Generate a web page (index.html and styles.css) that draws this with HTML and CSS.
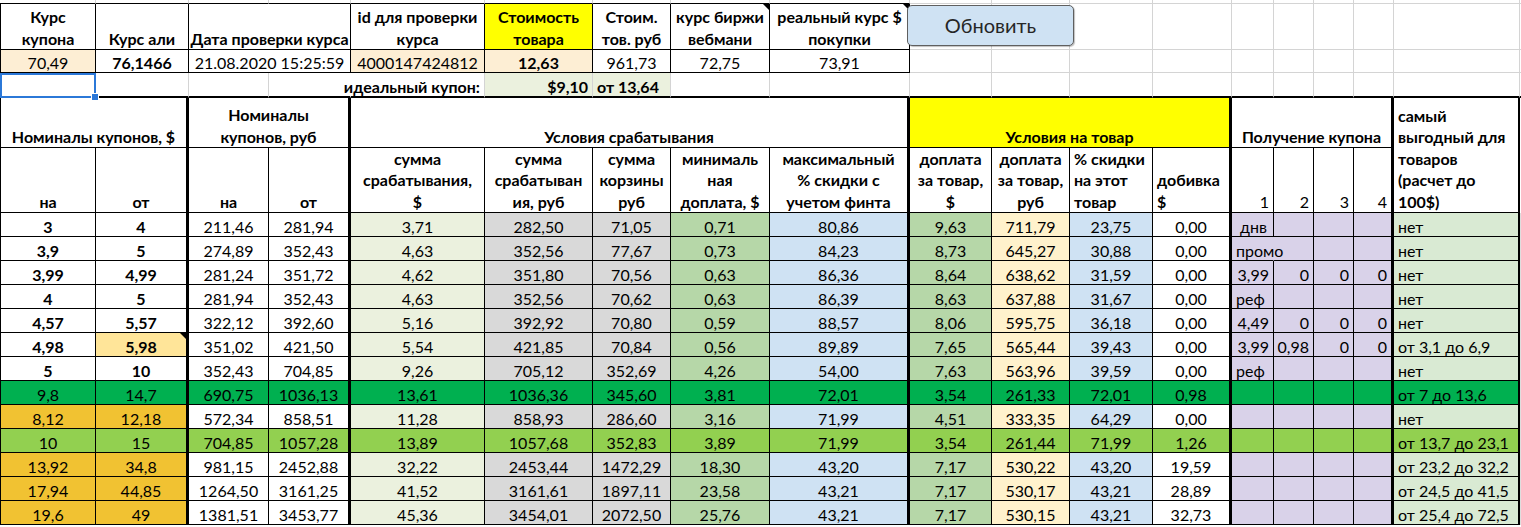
FILE: index.html
```html
<!DOCTYPE html>
<html lang="ru">
<head>
<meta charset="utf-8">
<title>Купоны</title>
<link rel="stylesheet" href="styles.css">
</head>
<body>
<div class="page">
<div class="sheet">

<div class="row r0">
<div class="c"></div><div class="c"></div><div class="c"></div><div class="c"></div><div class="c"></div><div class="c"></div><div class="c"></div><div class="c"></div><div class="c"></div><div class="c"></div><div class="c"></div><div class="c"></div><div class="c"></div><div class="c"></div><div class="c"></div><div class="c"></div><div class="c"></div><div class="c"></div><div class="c"></div>
</div>

<div class="row bk hd">
<div class="c fa"><span>Курс<br>купона</span></div>
<div class="c">Курс али</div>
<div class="c sp2">Дата проверки курса</div>
<div class="c"><span>id для проверки<br>курса</span></div>
<div class="c yl"><span>Стоимость<br>товара</span></div>
<div class="c"><span>Стоим.<br>тов. руб</span></div>
<div class="c cm"><span>курс биржи<br>вебмани</span></div>
<div class="c cm"><span>реальный курс $<br>покупки</span></div>
<div class="c gl"></div><div class="c gl"></div><div class="c gl"></div><div class="c gl"></div><div class="c gl"></div><div class="c gl"></div><div class="c gl"></div><div class="c gl"></div><div class="c gl"></div><div class="c gl"></div>
</div>

<div class="row bk">
<div class="c fa pe">70,49</div>
<div class="c bd">76,1466</div>
<div class="c sp2">21.08.2020 15:25:59</div>
<div class="c pe">4000147424812</div>
<div class="c pe bd">12,63</div>
<div class="c">961,73</div>
<div class="c">72,75</div>
<div class="c">73,91</div>
<div class="c gl"></div><div class="c gl"></div><div class="c gl"></div><div class="c gl"></div><div class="c gl"></div><div class="c gl"></div><div class="c gl"></div><div class="c gl"></div><div class="c gl"></div><div class="c gl"></div>
</div>

<div class="row r3">
<div class="c sc"><div class="sel"><i class="hdl"></i></div></div>
<div class="c"></div>
<div class="c"></div>
<div class="c nrb"></div>
<div class="c r bd">идеальный купон:</div>
<div class="c r bd lgn">$9,10</div>
<div class="c l bd lgn">от 13,64</div>
<div class="c"></div><div class="c"></div>
<div class="c"></div><div class="c"></div><div class="c"></div><div class="c"></div><div class="c"></div><div class="c"></div><div class="c"></div><div class="c"></div><div class="c"></div><div class="c"></div>
</div>

<div class="row bk hd">
<div class="c fa sp2 t3">Номиналы купонов, $</div>
<div class="c sp2 t3"><span>Номиналы<br>купонов, руб</span></div>
<div class="c sp5 t3">Условия срабатывания</div>
<div class="c sp4 t3 yl">Условия на товар</div>
<div class="c sp4 t3">Получение купона</div>
<div class="c rs2 l t2"><span>самый<br>выгодный для<br>товаров<br>(расчет до<br>100$)</span></div>
<div class="c rs2 sx"></div>
</div>

<div class="row bk hd">
<div class="c fa">на</div>
<div class="c t3">от</div>
<div class="c">на</div>
<div class="c t3">от</div>
<div class="c"><span>сумма<br>срабатывания,<br>$</span></div>
<div class="c"><span>сумма<br>срабатыван<br>ия, руб</span></div>
<div class="c"><span>сумма<br>корзины<br>руб</span></div>
<div class="c"><span>минималь<br>ная<br>доплата, $</span></div>
<div class="c t3"><span>максимальный<br>% скидки с<br>учетом финта</span></div>
<div class="c"><span>доплата<br>за товар,<br>$</span></div>
<div class="c"><span>доплата<br>за товар,<br>руб</span></div>
<div class="c l"><span>% скидки<br>на этот<br>товар</span></div>
<div class="c l t3"><span>добивка<br>$</span></div>
<div class="c r nw">1</div><div class="c r nw">2</div><div class="c r nw">3</div><div class="c r nw t3">4</div>
</div>

<div class="row bk dr">
<div class="c">3</div><div class="c">4</div><div class="c">211,46</div><div class="c">281,94</div><div class="c">3,71</div><div class="c">282,50</div><div class="c">71,05</div><div class="c">0,71</div><div class="c">80,86</div><div class="c">9,63</div><div class="c">711,79</div><div class="c">23,75</div><div class="c">0,00</div><div class="c l">&nbsp;днв</div><div class="c"></div><div class="c"></div><div class="c"></div><div class="c l">нет</div><div class="c"></div>
</div>
<div class="row bk dr">
<div class="c">3,9</div><div class="c">5</div><div class="c">274,89</div><div class="c">352,43</div><div class="c">4,63</div><div class="c">352,56</div><div class="c">77,67</div><div class="c">0,73</div><div class="c">84,23</div><div class="c">8,73</div><div class="c">645,27</div><div class="c">30,88</div><div class="c">0,00</div><div class="c l ov">промо</div><div class="c"></div><div class="c"></div><div class="c"></div><div class="c l">нет</div><div class="c"></div>
</div>
<div class="row bk dr">
<div class="c">3,99</div><div class="c">4,99</div><div class="c">281,24</div><div class="c">351,72</div><div class="c">4,62</div><div class="c">351,80</div><div class="c">70,56</div><div class="c">0,63</div><div class="c">86,36</div><div class="c">8,64</div><div class="c">638,62</div><div class="c">31,59</div><div class="c">0,00</div><div class="c r">3,99</div><div class="c r">0</div><div class="c r">0</div><div class="c r">0</div><div class="c l">нет</div><div class="c"></div>
</div>
<div class="row bk dr">
<div class="c">4</div><div class="c">5</div><div class="c">281,94</div><div class="c">352,43</div><div class="c">4,63</div><div class="c">352,56</div><div class="c">70,62</div><div class="c">0,63</div><div class="c">86,39</div><div class="c">8,63</div><div class="c">637,88</div><div class="c">31,67</div><div class="c">0,00</div><div class="c l">реф</div><div class="c"></div><div class="c"></div><div class="c"></div><div class="c l">нет</div><div class="c"></div>
</div>
<div class="row bk dr">
<div class="c">4,57</div><div class="c">5,57</div><div class="c">322,12</div><div class="c">392,60</div><div class="c">5,16</div><div class="c">392,92</div><div class="c">70,80</div><div class="c">0,59</div><div class="c">88,57</div><div class="c">8,06</div><div class="c">595,75</div><div class="c">36,18</div><div class="c">0,00</div><div class="c r">4,49</div><div class="c r">0</div><div class="c r">0</div><div class="c r">0</div><div class="c l">нет</div><div class="c"></div>
</div>
<div class="row bk dr">
<div class="c">4,98</div><div class="c cm lgold">5,98</div><div class="c">351,02</div><div class="c">421,50</div><div class="c">5,54</div><div class="c">421,85</div><div class="c">70,84</div><div class="c">0,56</div><div class="c">89,89</div><div class="c">7,65</div><div class="c">565,44</div><div class="c">39,43</div><div class="c">0,00</div><div class="c r">3,99</div><div class="c r">0,98</div><div class="c r">0</div><div class="c r">0</div><div class="c l">от 3,1 до 6,9</div><div class="c"></div>
</div>
<div class="row bk dr">
<div class="c">5</div><div class="c">10</div><div class="c">352,43</div><div class="c">704,85</div><div class="c">9,26</div><div class="c">705,12</div><div class="c">352,69</div><div class="c">4,26</div><div class="c">54,00</div><div class="c">7,63</div><div class="c">563,96</div><div class="c">39,59</div><div class="c">0,00</div><div class="c l">реф</div><div class="c"></div><div class="c"></div><div class="c"></div><div class="c l">нет</div><div class="c"></div>
</div>
<div class="row bk dr gr nb">
<div class="c">9,8</div><div class="c">14,7</div><div class="c">690,75</div><div class="c">1036,13</div><div class="c">13,61</div><div class="c">1036,36</div><div class="c">345,60</div><div class="c">3,81</div><div class="c">72,01</div><div class="c">3,54</div><div class="c">261,33</div><div class="c">72,01</div><div class="c">0,98</div><div class="c"></div><div class="c"></div><div class="c"></div><div class="c"></div><div class="c l">от 7 до 13,6</div><div class="c"></div>
</div>
<div class="row bk dr au nb">
<div class="c">8,12</div><div class="c">12,18</div><div class="c">572,34</div><div class="c">858,51</div><div class="c">11,28</div><div class="c">858,93</div><div class="c">286,60</div><div class="c">3,16</div><div class="c">71,99</div><div class="c">4,51</div><div class="c">333,35</div><div class="c">64,29</div><div class="c">0,00</div><div class="c"></div><div class="c"></div><div class="c"></div><div class="c"></div><div class="c l">нет</div><div class="c"></div>
</div>
<div class="row bk dr lg nb">
<div class="c">10</div><div class="c">15</div><div class="c">704,85</div><div class="c">1057,28</div><div class="c">13,89</div><div class="c">1057,68</div><div class="c">352,83</div><div class="c">3,89</div><div class="c">71,99</div><div class="c">3,54</div><div class="c">261,44</div><div class="c">71,99</div><div class="c">1,26</div><div class="c"></div><div class="c"></div><div class="c"></div><div class="c"></div><div class="c l">от 13,7 до 23,1</div><div class="c"></div>
</div>
<div class="row bk dr au nb">
<div class="c">13,92</div><div class="c">34,8</div><div class="c">981,15</div><div class="c">2452,88</div><div class="c">32,22</div><div class="c">2453,44</div><div class="c">1472,29</div><div class="c">18,30</div><div class="c">43,20</div><div class="c">7,17</div><div class="c">530,22</div><div class="c">43,20</div><div class="c">19,59</div><div class="c"></div><div class="c"></div><div class="c"></div><div class="c"></div><div class="c l">от 23,2 до 32,2</div><div class="c"></div>
</div>
<div class="row bk dr au nb">
<div class="c">17,94</div><div class="c">44,85</div><div class="c">1264,50</div><div class="c">3161,25</div><div class="c">41,52</div><div class="c">3161,61</div><div class="c">1897,11</div><div class="c">23,58</div><div class="c">43,21</div><div class="c">7,17</div><div class="c">530,17</div><div class="c">43,21</div><div class="c">28,89</div><div class="c"></div><div class="c"></div><div class="c"></div><div class="c"></div><div class="c l">от 24,5 до 41,5</div><div class="c"></div>
</div>
<div class="row bk dr au nb">
<div class="c">19,6</div><div class="c">49</div><div class="c">1381,51</div><div class="c">3453,77</div><div class="c">45,36</div><div class="c">3454,01</div><div class="c">2072,50</div><div class="c">25,76</div><div class="c">43,21</div><div class="c">7,17</div><div class="c">530,15</div><div class="c">43,21</div><div class="c">32,73</div><div class="c"></div><div class="c"></div><div class="c"></div><div class="c"></div><div class="c l">от 25,4 до 72,5</div><div class="c"></div>
</div>

</div>
<button class="btn" type="button">Обновить</button>
</div>
</body>
</html>
```

FILE: styles.css
```css
* { box-sizing: border-box; }

body {
  margin: 0;
  background: #fff;
  color: #000;
  font-family: Lato, "Open Sans", "Liberation Sans", sans-serif;
  font-size: 16px;
}

.page {
  position: relative;
  width: 1521px;
  height: 527px;
  overflow: hidden;
}

.sheet {
  display: grid;
  grid-template-columns: 96px 93px 80px 82px 134px 108px 78px 99px 140px 82px 78px 83px 79px 42px 40px 40px 40px 126px 1px;
  grid-template-rows: 4px 46px 23px 25px 50px 65px repeat(13, 24px);
}

.row { display: contents; }

.c {
  display: flex;
  justify-content: center;
  align-items: flex-end;
  text-align: center;
  white-space: nowrap;
  line-height: 18px;
  padding: 0 3px;
  min-width: 0;
  border-right: 1px solid #d4d4d4;
  border-bottom: 1px solid #d4d4d4;
}

.bk > .c { border-color: #000; }
.bk > .gl { border-color: #d4d4d4; }

.hd > .c { line-height: 21.5px; font-weight: 700; }

.r0 > :nth-child(-n+9) { border-bottom-color: #000; }
.r3 > .c { border-bottom: 2px solid #000; }

.sp2 { grid-column: span 2; }
.sp4 { grid-column: span 4; }
.sp5 { grid-column: span 5; }
.rs2 { grid-row: span 2; }

.c.l { justify-content: flex-start; text-align: left; padding-left: 4px; }
.c.r { justify-content: flex-end; text-align: right; padding-right: 4px; }
.c.bd { font-weight: 700; }
.c.nw { font-weight: 400; }
.c.fa { border-left: 1px solid #000; }

.sheet .t3 { border-right: 3px solid #000; }
.sheet .t2 { border-right: 2px solid #000; }
.sheet .sx { border: 0; }
.sheet .nrb { border-right-color: #fff; }

.yl { background: #ffff00; }
.pe { background: #fdeed4; }
.lgn { background: #ebf1de; }

/* data rows */
.dr > :nth-child(1) { border-left: 1px solid #000; font-weight: 700; }
.dr > :nth-child(2) { font-weight: 700; border-right: 3px solid #000; }
.dr > :nth-child(4),
.dr > :nth-child(9),
.dr > :nth-child(13),
.dr > :nth-child(17) { border-right-width: 3px; }
.dr > :nth-child(18) { border-right-width: 2px; background: #d9ead3; }
.dr > :nth-child(19) { border: 0; background: #dedede; }

.dr > :nth-child(5) { background: #ebf1de; }
.dr > :nth-child(6),
.dr > :nth-child(7) { background: #d9d9d9; }
.dr > :nth-child(8),
.dr > :nth-child(10) { background: #b6d7a8; }
.dr > :nth-child(9),
.dr > :nth-child(12) { background: #cfe2f3; }
.dr > :nth-child(11) { background: #fff2cc; }
.dr > :nth-child(n+14):nth-child(-n+17) { background: #d9d2e9; }

.dr.gr > .c:not(:last-child) { background: #00b050; }
.dr.lg > .c:not(:last-child) { background: #92d050; }
.dr.au > :nth-child(-n+2) { background: #f1c232; }
.dr.nb > :nth-child(-n+2) { font-weight: 400; }
.dr > .lgold { background: #ffe599; }

.dr > .ov {
  position: relative;
  z-index: 1;
  border-right-color: #d9d2e9;
}

/* comment indicator */
.cm { position: relative; }
.cm::after {
  content: "";
  position: absolute;
  top: 0;
  right: 0;
  width: 0;
  height: 0;
  border-left: 6px solid transparent;
  border-top: 6px solid #000;
}

/* active cell selection */
.sc { position: relative; }
.sel {
  position: absolute;
  left: 0;
  top: 0;
  width: 96px;
  height: 25px;
  border: 2px solid #2b78d8;
  z-index: 2;
}
.hdl {
  position: absolute;
  right: -5px;
  bottom: -5px;
  width: 8px;
  height: 8px;
  background: #2b78d8;
  border: 1px solid #fff;
}

.btn {
  position: absolute;
  left: 907px;
  top: 5px;
  width: 167px;
  height: 41px;
  margin: 0;
  padding: 0 0 2px;
  background: #cfe2f3;
  border: 1px solid #5f5f5f;
  border-radius: 5px;
  box-shadow: 1px 1px 1px rgba(0, 0, 0, 0.25);
  font-family: Lato, "Open Sans", "Liberation Sans", sans-serif;
  font-size: 20px;
  color: #262626;
}
```
